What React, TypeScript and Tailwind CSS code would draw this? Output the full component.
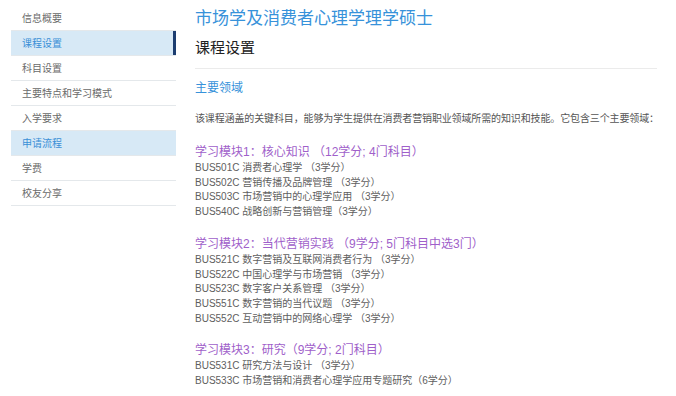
const font = { fontFamily: '"Liberation Sans", "Noto Sans CJK SC", sans-serif' };

const navItems = [
  { label: "信息概要" },
  { label: "课程设置", active: true },
  { label: "科目设置" },
  { label: "主要特点和学习模式" },
  { label: "入学要求" },
  { label: "申请流程", highlight: true },
  { label: "学费" },
  { label: "校友分享" },
];

const modules = [
  {
    title: "学习模块1：核心知识 （12学分; 4门科目）",
    courses: [
      "BUS501C 消费者心理学 （3学分）",
      "BUS502C 营销传播及品牌管理 （3学分）",
      "BUS503C 市场营销中的心理学应用 （3学分）",
      "BUS540C 战略创新与营销管理（3学分）",
    ],
  },
  {
    title: "学习模块2：当代营销实践 （9学分; 5门科目中选3门）",
    courses: [
      "BUS521C 数字营销及互联网消费者行为 （3学分）",
      "BUS522C 中国心理学与市场营销 （3学分）",
      "BUS523C 数字客户关系管理 （3学分）",
      "BUS551C 数字营销的当代议题 （3学分）",
      "BUS552C 互动营销中的网络心理学 （3学分）",
    ],
  },
  {
    title: "学习模块3：研究（9学分; 2门科目）",
    courses: [
      "BUS531C 研究方法与设计 （3学分）",
      "BUS533C 市场营销和消费者心理学应用专题研究（6学分）",
    ],
  },
];

function Sidebar() {
  return (
    <nav className="w-[165px] shrink-0 pt-[6px]">
      {navItems.map((item) => (
        <div
          key={item.label}
          className={
            "relative h-[25px] flex items-center pl-[11px] border-b border-[#e4e8eb] text-[10px] " +
            (item.active || item.highlight ? "bg-[#d7e9f6] text-[#3a8fd6]" : "text-[#6a6a6a]")
          }
        >
          {item.label}
          {item.active && <span className="absolute right-0 top-0 h-full w-[3px] bg-[#1c3d70]" />}
        </div>
      ))}
    </nav>
  );
}

export default function App() {
  return (
    <div className="w-[676px] h-[396px] bg-white flex pl-[11px] overflow-hidden" style={font}>
      <Sidebar />
      <main className="ml-[19px] w-[462px] pt-[7px]">
        <h1 className="text-[17px] leading-[24px] text-[#3792da]">市场学及消费者心理学理学硕士</h1>
        <h2 className="mt-[7px] text-[15px] leading-[20px] text-[#222] pb-[10px] border-b border-[#ebebeb]">课程设置</h2>
        <h3 className="mt-[10px] text-[12px] leading-[18px] text-[#3792da]">主要领域</h3>
        <p className="mt-[14px] text-[10px] leading-[16px] text-[#555] whitespace-nowrap tracking-[-0.13px]">
          该课程涵盖的关键科目，能够为学生提供在消费者营销职业领域所需的知识和技能。它包含三个主要领域：
        </p>
        {modules.map((m, i) => (
          <section key={m.title} className={i === 0 ? "mt-[16px]" : "mt-[15px]"}>
            <h4 className="text-[12px] leading-[18px] text-[#a05fca]">{m.title}</h4>
            <ul className="text-[10px] leading-[14.7px] text-[#5e5e5e]">
              {m.courses.map((c) => (
                <li key={c} className="whitespace-nowrap">{c}</li>
              ))}
            </ul>
          </section>
        ))}
      </main>
    </div>
  );
}
